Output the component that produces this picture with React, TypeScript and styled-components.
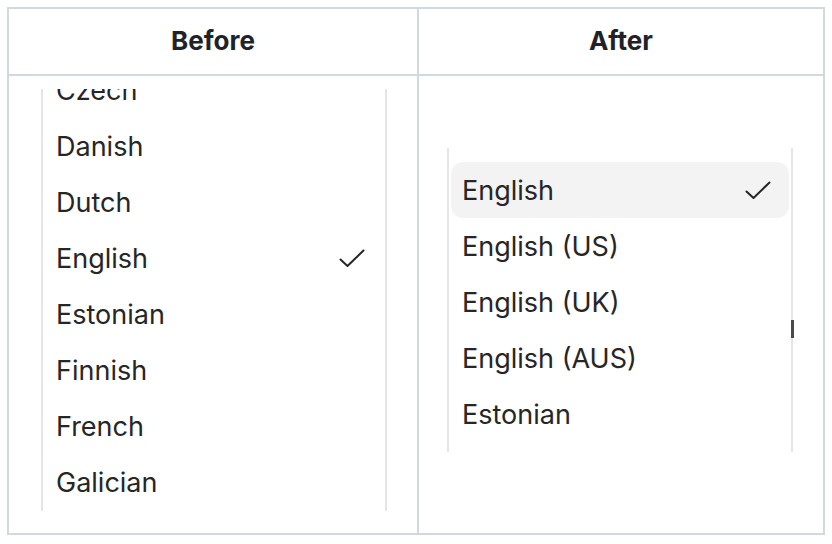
import styled, { createGlobalStyle } from 'styled-components'

const GlobalStyle = createGlobalStyle`
    body {
        margin: 0;
        background: #ffffff;
        font-family: Inter, "Liberation Sans", sans-serif;
    }
`

const beforeItems = ['Czech', 'Danish', 'Dutch', 'English', 'Estonian', 'Finnish', 'French', 'Galician']
const afterItems = ['English', 'English (US)', 'English (UK)', 'English (AUS)', 'Estonian']

const Check = () => (
    <svg width="26" height="19" viewBox="0 0 26 19" fill="none">
        <path d="M1.5 10.5 L8.5 17 L24.5 1.5" stroke="#262626" strokeWidth="2" strokeLinecap="round" strokeLinejoin="round" />
    </svg>
)

const Page = styled.div`
    padding: 7px;
`

const Table = styled.div`
    display: grid;
    grid-template-columns: 410px 406px;
    grid-template-rows: 67px 459px;
    width: 818px;
    border-top: 2px solid #d1d9e0;
    border-left: 2px solid #d1d9e0;
    box-sizing: border-box;
`

const HeadCell = styled.div`
    display: flex;
    align-items: center;
    justify-content: center;
    font-size: 26px;
    font-weight: 700;
    color: #1f2328;
    border-right: 2px solid #d1d9e0;
    border-bottom: 2px solid #d1d9e0;
    padding-bottom: 2px;
`

const BodyCell = styled.div<{ $padLeft: number; $padTop: number }>`
    border-right: 2px solid #d1d9e0;
    border-bottom: 2px solid #d1d9e0;
    padding: ${p => p.$padTop}px 0 0 ${p => p.$padLeft}px;
    box-sizing: border-box;
    overflow: hidden;
`

const Menu = styled.div<{ $height: number; $offset: number }>`
    position: relative;
    width: 346px;
    height: ${p => p.$height}px;
    box-sizing: border-box;
    border-left: 2px solid #e6e6e6;
    border-right: 2px solid #e6e6e6;
    padding: ${p => Math.max(p.$offset, 0)}px 2px 0 2px;
    overflow: ${p => (p.$offset < 0 ? 'hidden' : 'visible')};
    background: #ffffff;

    & > ul {
        margin-top: ${p => Math.min(p.$offset, 0)}px;
    }
`

const ShadowMark = styled.div<{ $top: number }>`
    position: absolute;
    top: ${p => p.$top}px;
    right: -3px;
    width: 3px;
    height: 18px;
    background: #4a4a4a;
`

const List = styled.ul`
    list-style: none;
    margin: 0;
    padding: 0;
`

const Item = styled.li<{ $active?: boolean }>`
    display: flex;
    align-items: center;
    justify-content: space-between;
    height: 56px;
    padding: 0 18px 0 11px;
    border-radius: 12px;
    background: ${p => (p.$active ? '#f3f3f3' : 'transparent')};
    font-size: 27px;
    color: #262626;
`

export default function App() {
    return (
        <Page>
            <GlobalStyle />
            <Table>
                <HeadCell>Before</HeadCell>
                <HeadCell>After</HeadCell>
                <BodyCell $padLeft={32} $padTop={13}>
                    <Menu $height={422} $offset={-27}>
                        <List>
                            {beforeItems.map(name => (
                                <Item key={name}>
                                    <span>{name}</span>
                                    {name === 'English' && <Check />}
                                </Item>
                            ))}
                        </List>
                    </Menu>
                </BodyCell>
                <BodyCell $padLeft={28} $padTop={72}>
                    <Menu $height={304} $offset={14}>
                        <ShadowMark $top={172} />
                        <List>
                            {afterItems.map((name, i) => (
                                <Item key={name} $active={i === 0}>
                                    <span>{name}</span>
                                    {i === 0 && <Check />}
                                </Item>
                            ))}
                        </List>
                    </Menu>
                </BodyCell>
            </Table>
        </Page>
    )
}
